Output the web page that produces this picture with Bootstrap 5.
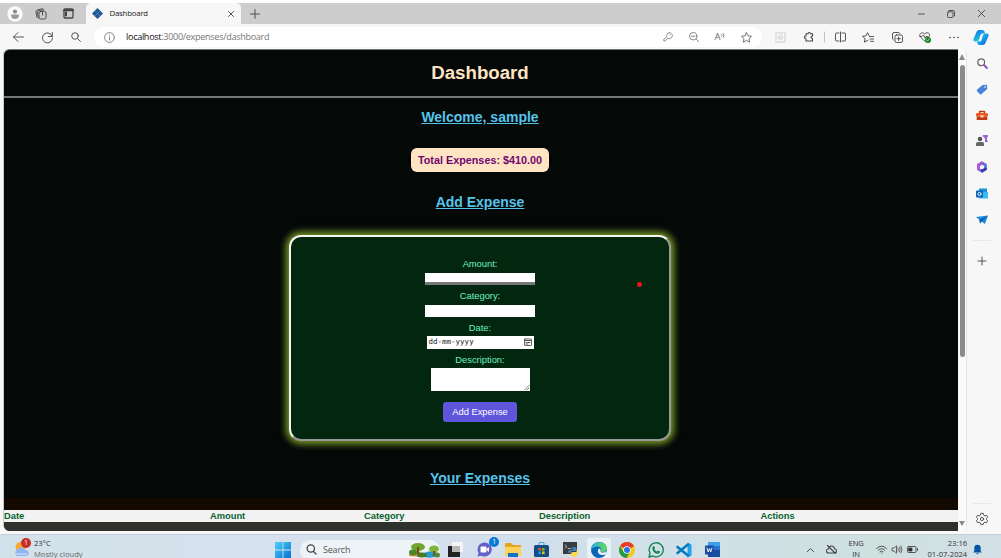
<!DOCTYPE html>
<html lang="en">
<head>
<meta charset="utf-8">
<meta name="viewport" content="width=device-width, initial-scale=1">
<title>Dashboard</title>
<link href="https://cdn.jsdelivr.net/npm/bootstrap@5.3.0/dist/css/bootstrap.min.css" rel="stylesheet">
<style>
body{width:1001px;height:558px;overflow:hidden;background:#f7f7f7;font-family:"Open Sans","Noto Sans",sans-serif;font-size:9px;line-height:1;color:#222}
svg{display:block;flex:none;overflow:visible;fill:none;stroke:#444;stroke-width:.9;stroke-linecap:round;stroke-linejoin:round}
.cell{flex:none;display:flex;align-items:center;justify-content:center;height:100%}
.w26{width:26px}.w28{width:28.4px}
.topgap{height:3px;background:#fff}
.tabstrip{height:21px;background:#cdcdcd}
.tabitem{width:155px;margin-left:4px;height:21px;background:#f7f7f7;border-radius:5px 5px 0 0;font-size:7.8px;letter-spacing:-.2px;padding:0 5px 0 6px}
.toolbar{height:25px;padding-top:1px}
.omni{width:668px;height:20px;border-radius:10px;background:#fff;font-size:9.1px;color:#777;padding-left:10px;padding-right:3px}
.omni b{font-weight:400;color:#111}
.url{margin-left:11px;letter-spacing:-.32px}
.viewport{height:482px;width:954px;margin-left:4px;background:#040807;border-radius:6px 0 0 6px;overflow:hidden;font-family:"Liberation Sans",Arial,sans-serif;text-align:center;border-top:1px solid #777;box-shadow:-1px 0 0 #c9c9c9}
.centered{width:952px}
.viewport h1{font-size:18.66px;font-weight:700;color:#ffe4c4;padding:12px 0 0;margin:0;line-height:22px}
.rule{height:2px;background:#777;margin-top:12px}
.viewport h2{font-size:14px;font-weight:700;color:#56c4ea;text-decoration:underline;line-height:16px;margin:0}
.total{display:inline-block;width:138px;height:24px;line-height:24px;border-radius:6px;background:#ffe4c4;color:#71066f;font-weight:700;font-size:10.8px;margin:23px 0 0}
.formbox{width:382px;height:206px;margin:25px auto 0;background:#03260f;border:2px solid;border-color:#f4f4f4 #989898 #989898 #f4f4f4;border-radius:12px;box-shadow:0 0 7px 3px #7c9f28;padding-top:21px;font-size:9.33px;color:#6df3c0}
.formbox label{height:12px;line-height:12px}
.fld{display:block;background:#fff;border:0;border-radius:0;height:12px;width:109.5px;padding:0}
.number-field{border-bottom:3px solid #777}
.datefield{width:107px;height:12.5px;font:7.5px/12px "DejaVu Sans Mono",monospace;color:#222;padding:0 2px}
.addbtn{background:#5f55dc;color:#fff;border-radius:3px;width:74px;height:20px;line-height:20px;font-size:9.33px;padding:0;border:0}
.brownband{height:12px;background:#130900;margin-top:12px}
.headrow{height:12px;background:#f2f2f2;color:#08622f;font-weight:700;font-size:9.33px;line-height:12px;text-align:left}
.darkrow{height:9px;background:#2f312c}
.scroller{width:9px;height:482px;background:#fafafa;border-radius:0 5px 5px 0;border-right:1px solid #e4e4e4}
.thumb{width:5px;height:292px;border-radius:3px;background:#8b8b8b;margin-top:5px}
.tri{width:0;height:0;border:3px solid transparent}
.sidebar{width:30px;padding-top:1px}
.sidebar .cell{height:26.1px}
.sidebar hr{width:18px;margin:0;border-top:1px solid #bbb}
.reddot{left:636.5px;top:281.5px;width:5px;height:5px;background:#e8141c}
.taskbar{height:25px;margin-top:2px;background:linear-gradient(90deg,#d2e2ea,#d7e1ee 30%,#d2dfec 52%,#cfe0e6 72%,#cfe0df 88%,#d3e0e8);border-top:1px solid #c5ced8;font-size:7.6px;color:#333;padding-top:5.5px;overflow:hidden}
.taskbar .cell{height:18px;width:28.56px}
.two{line-height:10.5px}
.tsearch{width:140px;height:20px;border-radius:10px;background:#eef3f8;font-size:9px;letter-spacing:-.2px;color:#555;margin-top:-1px;padding-left:6px}
.pip{left:19px;top:-4px;width:10px;height:10px;font-size:7px;line-height:10px;color:#fff;text-align:center}
.active-app{background:#e9f0f6;border-radius:3px;width:24px;height:24px}
</style>
</head>
<body>
<div class="topgap"></div>
<header class="tabstrip d-flex align-items-center">
  <div class="cell" style="width:30px"><svg width="16" height="16" viewBox="0 0 16 16"><circle cx="8" cy="8" r="7.7" fill="#fafafa" stroke="none"/><circle cx="8" cy="5.6" r="2.1" fill="#8c8c8c" stroke="none"/><path d="M4.2 8.5h7.6v1.5c0 2-1.7 3-3.800 3s-3.800-1-3.800-3z" fill="#999" stroke="none"/></svg></div>
  <div class="cell" style="width:22px"><svg width="12" height="12" viewBox="0 0 12 12"><rect x="4" y="3.500" width="7" height="7.500" rx="1.500"/><path d="M2 9.500 1 4Q.8 2.500 2.200 2L7 .8Q8.500.6 9 2M3.500 10 2.500 5Q2.300 3 4 2.500L8 2M7.500 3.500V7"/></svg></div>
  <div class="cell" style="width:32px"><svg width="11" height="11" viewBox="0 0 11 11"><rect x="1" y="1" width="9" height="9" rx="1" stroke-width="1.300"/><path d="M1 2.200h9M3 4.500v3" stroke-width="2"/></svg></div>
  <div class="tabitem d-flex align-items-center" style="margin-left:2px">
    <svg width="11" height="11" viewBox="0 0 11 11"><path d="M5.500 0 11 5.500 5.500 11 0 5.500z" fill="#1f5795" stroke="none"/><path d="m3 3 5 5m0-5-5 5" stroke="#5f8dbd" stroke-width=".7"/></svg>
    <span class="me-auto" style="margin-left:6.500px">Dashboard</span>
    <svg style="margin-right:2px" width="6" height="6" viewBox="0 0 6 6"><path d="m.5.5 5 5m0-5-5 5"/></svg>
  </div>
  <div class="cell" style="width:28px"><svg width="10" height="10" viewBox="0 0 10 10"><path d="M5 .5v9M.5 5h9"/></svg></div>
  <div class="cell ms-auto" style="width:30px"><svg width="7" height="8" viewBox="0 0 7 8"><path d="M.5 4h6"/></svg></div>
  <div class="cell" style="width:30px"><svg width="8" height="8" viewBox="0 0 8 8"><rect x=".5" y="1.800" width="5.500" height="5.700" rx="1"/><path d="M2 .5h4Q7.500.5 7.500 2v4"/></svg></div>
  <div class="cell" style="width:30px;margin-right:5px"><svg width="7" height="7" viewBox="0 0 7 7"><path d="m.3.3 6.400 6.400m0-6.400L.3 6.700"/></svg></div>
</header>

<nav class="toolbar d-flex align-items-center">
  <div class="cell" style="width:33px;padding-left:4px"><svg width="11" height="10" viewBox="0 0 11 10"><path d="M10.500 5H.5M5 .5.500 5 5 9.500"/></svg></div>
  <div class="cell" style="width:29px"><svg width="11" height="11" viewBox="0 0 11 11"><path d="M10.300 4.500A5 5 0 1 0 10.500 6M10.300.5v4h-4"/></svg></div>
  <div class="cell" style="width:28px"><svg width="10" height="10" viewBox="0 0 10 10"><circle cx="4" cy="4" r="3.300"/><path d="M6.500 6.500 9.500 9.500"/></svg></div>
  <div class="omni d-flex align-items-center" style="margin-left:4px">
    <svg width="11" height="11" viewBox="0 0 11 11" style="stroke:#777"><circle cx="5.500" cy="5.500" r="4.900"/><path d="M5.500 5v3M5.500 3v.2"/></svg>
    <span class="text-nowrap url"><b>localhost</b>:3000/expenses/dashboard</span>
    <div class="cell w26 ms-auto"><svg width="10" height="10" viewBox="0 0 10 10" style="stroke:#777"><path d="M3.700 4.500A2.900 2.900 0 1 1 6 6.500L4.800 6.300 2 9H.8V7.600z" stroke-width=".8"/><path d="M7.200 2.800v.1"/></svg></div>
    <div class="cell w26"><svg width="10" height="10" viewBox="0 0 10 10" style="stroke:#777"><circle cx="4.200" cy="4.200" r="3.700"/><path d="M2.500 4.200h3.400M7 7l2.500 2.500"/></svg></div>
    <div class="cell w26" style="color:#666;font-size:9.500px">A<svg width="5" height="8" viewBox="0 0 5 8" style="stroke:#666;stroke-width:.8"><path d="M.5 1.500q1 1 0 2M2.300.5q1.700 2 0 4"/></svg></div>
    <div class="cell w26"><svg width="11" height="11" viewBox="0 0 11 11" style="stroke:#666"><path d="m5.500.7 1.500 3.100 3.500.5L8 6.700l.6 3.500-3.100-1.700-3.100 1.700L3 6.700.5 4.300 4 3.800z"/></svg></div>
  </div>
  <div class="cell" style="width:36px"><svg width="11" height="11" viewBox="0 0 11 11"><rect width="11" height="11" rx="1" fill="#e2e2e2" stroke="none"/><path d="M2.500 4.500v-2h2m2 0h2v2M2.500 6.500v2h2m2 0h2v-2" stroke="#fff"/></svg></div>
  <div class="cell" style="width:22px"><svg width="10" height="10" viewBox="0 0 10 10"><path d="M2 1.800h2Q4 .5 5.200.5T6.500 1.800h2V4Q7 4 7 5.200T8.500 6.500V9H2V6.700Q.5 6.700.5 5.300T2 4z" stroke-width="1.100"/></svg></div>
  <div class="cell" style="width:8px"><svg width="1" height="10"><path d="M.5 0v10" stroke="#bbb"/></svg></div>
  <div class="cell" style="width:24px"><svg width="11" height="10" viewBox="0 0 11 10"><path d="M4 1H1.500Q.5 1 .5 2v6q0 1 1 1H4M7 1h2.500q1 0 1 1v6q0 1-1 1H7M5.500 0v10"/></svg></div>
  <div class="cell" style="width:32px"><svg width="12" height="11" viewBox="0 0 12 11"><path d="M7 3.500 5.500.7 4 3.800.5 4.300 3 6.700l-.6 3.500L6 8.200M7.500 4.500h4M8 7h3.500M8.500 9.300h3"/></svg></div>
  <div class="cell" style="width:27px"><svg width="11" height="11" viewBox="0 0 11 11"><rect x="3" y="3" width="7.500" height="7.500" rx="1.500"/><path d="M6.700 5v3.500M5 6.700h3.500M1.500 8Q.5 7.500.5 6V2Q.5.5 2 .5h4q1.500 0 2 1"/></svg></div>
  <div class="cell" style="width:28.400px"><svg width="12" height="11" viewBox="0 0 12 11"><path d="M6 9.500 1.500 5.200C-1 2.500 3-1 5.700 2 8.500-1 12 2 10.200 4.500M1 4.500h2L4.500 3 6 6l1-1.500h2"/><circle cx="9" cy="8" r="3" fill="#138222" stroke="none"/><path d="m7.700 8 1 .9 1.600-1.800" stroke="#fff" stroke-width=".7"/></svg></div>
  <div class="cell w28"><svg width="10" height="3" viewBox="0 0 10 3"><path d="M1 1.500h.1M5 1.500h.1M9 1.500h.1" stroke-width="1.600"/></svg></div>
  <div class="cell" style="width:27px"><svg width="16" height="15" viewBox="0 0 16 15"><defs><linearGradient id="cpa" x2=".6" y2="1"><stop stop-color="#155bd8"/><stop offset=".5" stop-color="#14a0ed"/><stop offset="1" stop-color="#38d8ad"/></linearGradient><linearGradient id="cpb" y2="1"><stop stop-color="#26d8ca"/><stop offset=".55" stop-color="#1594f1"/><stop offset="1" stop-color="#1652ce"/></linearGradient></defs><path d="M4 1Q5 0 6.500 0h3Q11 0 11.500 1.500L12 3.500H9.500Q8 3.500 7.500 5L6 10Q5.500 11.500 4 11.500H2Q0 11.500.5 9z" fill="url(#cpa)" stroke="none"/><path d="M12 14q-1 1-2.500 1h-3Q5 15 4.500 13.500L4 11.500h2.500q1.500 0 2-1.500L10 5q.5-1.500 2-1.500h2q2 0 1.500 2.500z" fill="url(#cpb)" stroke="none"/></svg></div>
</nav>

<div class="d-flex">
  <main class="viewport">
    <div class="centered"><h1>Dashboard</h1></div>
    <div class="rule"></div>
    <div class="centered">
    <h2 style="padding-top:11px">Welcome, sample</h2>
    <div class="total">Total Expenses: $410.00</div>
    <h2 style="margin-top:22px">Add Expense</h2>
    <form class="formbox d-flex flex-column align-items-center">
      <label>Amount:</label>
      <span class="fld number-field" style="margin:3px 0 5px"></span>
      <label>Category:</label>
      <span class="fld" style="margin:2.500px 0 5px"></span>
      <label>Date:</label>
      <span class="fld datefield d-flex align-items-center justify-content-between" style="margin:2.500px 0 5px"><span class="pt-1 mb-1">dd-mm-yyyy</span><svg width="8" height="8" viewBox="0 0 8 8"><rect x=".5" y="1" width="7" height="6.500" rx=".5" stroke-width=".8"/><path d="M.5 2.500h7M2 4.500h1M4 4.500h2M2 6h2"/></svg></span>
      <label>Description:</label>
      <span class="fld d-flex align-items-end justify-content-end" style="width:99px;height:22.500px;margin:2.500px 0 11px"><svg width="6" height="6" viewBox="0 0 6 6"><path d="M.5 5 5 .5M3 5l2-2" stroke-width=".7"/></svg></span>
      <button type="button" class="btn addbtn">Add Expense</button>
    </form>
    <h2 style="margin-top:29px">Your Expenses</h2>
    </div>
    <div class="brownband"></div>
    <div class="headrow d-flex"><span style="width:206px">Date</span><span style="width:154px">Amount</span><span style="width:175px">Category</span><span style="width:221.500px">Description</span><span>Actions</span></div>
    <div class="darkrow"></div>
  </main>
  <div class="scroller d-flex flex-column align-items-center">
    <div class="tri" style="border-bottom:6px solid #888;border-top:0;margin-top:5px"></div>
    <div class="thumb"></div>
    <div class="tri mt-auto" style="border-top:5px solid #888;border-bottom:0;margin-bottom:5px"></div>
  </div>
  <aside class="sidebar d-flex flex-column align-items-center">
    <div class="cell"><svg width="11" height="11" viewBox="0 0 11 11"><circle cx="4.200" cy="4.200" r="3.400" style="stroke:#666" stroke-width="1.200"/><path d="m7 7 3 3" style="stroke:#8b4fc2;stroke-width:1.800"/></svg></div>
    <div class="cell"><svg width="12" height="11" viewBox="0 0 12 11"><path d="M6.500 1 11 .8l.2 4.200-5.500 5q-1 1-2 0L1.200 7.500q-1-1 0-2z" fill="#4c82dc" stroke="none"/><circle cx="9" cy="3" r=".8" fill="#fff" stroke="none"/></svg></div>
    <div class="cell"><svg width="12" height="11" viewBox="0 0 12 11"><path d="M3.500 3V1.500h5V3" style="stroke:#b53613;stroke-width:1.300"/><rect y="3" width="12" height="3.500" rx="1" fill="#ed5a22" stroke="none"/><rect x=".7" y="6.500" width="10.600" height="3.500" fill="#c33d12" stroke="none"/><rect x="4.500" y="5" width="3" height="2.500" fill="#ffcab0" stroke="none"/></svg></div>
    <div class="cell"><svg width="12" height="12" viewBox="0 0 12 12"><g stroke="none"><circle cx="4" cy="4" r="2.300" fill="#555"/><path d="M0 8.500Q0 7 1.500 7h5Q8 7 8 8.500V11H0z" fill="#666"/><path d="M6.800 0H12v2h-1v3l1 2H9V4L8 2H6.800z" fill="#9a62d8"/></g></svg></div>
    <div class="cell"><svg width="12" height="12" viewBox="0 0 12 12"><path d="m6 2 3.500 2v4L6 10 2.500 8V4z" style="stroke:#5978df;stroke-width:2.800"/><path d="M2.500 8V4L6 2" style="stroke:#b258cf;stroke-width:2.800"/><path d="M9.500 8 6 10" style="stroke:#4538b8;stroke-width:2.800"/></svg></div>
    <div class="cell"><svg width="12" height="11" viewBox="0 0 12 11"><g stroke="none"><path d="M3 .5h8V5H3z" fill="#1d8fe0"/><path d="M3 4h9v6.500H3z" fill="#38b9f1"/><rect y="2.500" width="7" height="7" rx="1" fill="#0a62b6"/></g><circle cx="3.500" cy="6" r="1.600" style="stroke:#fff"/></svg></div>
    <div class="cell"><svg width="12" height="11" viewBox="0 0 12 11"><g stroke="none"><path d="M0 3 12 1.500 9 10 5.500 7.500 4 9.500 3.500 6z" fill="#168de0"/><path d="M3.500 6 12 1.500 5.500 7.500 4 9.500z" fill="#0b5796"/></g></svg></div>
    <hr style="margin-top:7px">
    <div class="cell" style="margin-top:7.500px"><svg width="8" height="8" viewBox="0 0 8 8"><path d="M4 0v8M0 4h8"/></svg></div>
    <hr style="margin-top:229px">
    <div class="cell" style="margin-top:2px"><svg width="12" height="12" viewBox="0 0 12 12"><path d="m4.700.7-.4 1.500-1.200.7-1.600-.5L.4 4.300l1.100 1.200v1L.4 7.700l1.100 2 1.600-.5 1.200.7.4 1.500h2.600l.4-1.500 1.200-.7 1.600.5 1.100-2-1.100-1.200v-1l1.100-1.200-1.100-2-1.600.5-1.200-.7-.4-1.500z"/><circle cx="6" cy="6" r="1.600"/></svg></div>
  </aside>
</div>
<span class="reddot position-absolute rounded-circle"></span>

<footer class="taskbar d-flex align-items-start">
  <div class="position-relative" style="width:34px;height:18px;padding:0 0 0 13px"><svg width="16" height="16" viewBox="0 0 16 16"><circle cx="7.500" cy="6" r="5" fill="#f5a832" stroke="none"/><path d="M4 15a3.500 3.500 0 0 1 0-6 4.500 4.500 0 0 1 8 0 3 3 0 0 1 1 6z" fill="#8eb5f2" stroke="none"/><path d="M4 13h9" style="stroke:#b9d0fa;stroke-width:2"/></svg><span class="pip position-absolute rounded-circle" style="left:21px;top:-3px;background:#c62a20">1</span></div>
  <div class="two text-nowrap" style="width:232px;margin-top:-2.500px"><div>23°C</div><div style="color:#666">Mostly cloudy</div></div>
  <div class="cell" style="width:34px"><svg width="16" height="16" viewBox="0 0 16 16"><defs><linearGradient id="wn" x2="1" y2="1"><stop stop-color="#4bd0fb"/><stop offset="1" stop-color="#0872d0"/></linearGradient></defs><path d="M0 0h7.600v7.600H0zM8.400 0H16v7.600H8.400zM0 8.400h7.600V16H0zM8.400 8.400H16V16H8.400z" fill="url(#wn)" stroke="none"/></svg></div>
  <div class="tsearch d-flex align-items-center"><svg width="11" height="11" viewBox="0 0 11 11"><circle cx="4.800" cy="4.500" r="3.700" stroke-width="1.300"/><path d="m7.500 7.500 2.500 2.500" stroke-width="1.300"/></svg><span style="margin-left:6px">Search</span>
    <svg class="ms-auto me-0" width="32" height="17" viewBox="0 0 32 17"><g stroke="none"><path d="M1 15Q2 10 7 11l3-2 3 3q3-1 4 4z" fill="#d88a2e"/><path d="M16 12q5-3 12-1l3 4q-8 3-15 1z" fill="#2a9bd0"/><ellipse cx="10" cy="6" rx="7" ry="4" fill="#6ea72b"/><ellipse cx="5" cy="11.500" rx="4" ry="3" fill="#4b8728"/><path d="M9 6h2v9H9z" fill="#7b4b20"/><ellipse cx="26" cy="8" rx="5" ry="3.500" fill="#7cb63a"/><ellipse cx="14" cy="14" rx="5" ry="2.500" fill="#447c2c"/><path d="M25 10h2v5h-2z" fill="#725029"/><ellipse cx="29" cy="14" rx="3" ry="2.500" fill="#4e8b32"/></g></svg></div>
  <div class="cell" style="margin-left:1.700px"><svg width="15" height="15" viewBox="0 0 15 15"><g stroke="none"><path d="M0 4h12v11H0z" fill="#222"/><path d="M4 0h11v10H4z" fill="#f4f4f4"/><path d="M4 4h8v6H4z" fill="#b8b8b8"/></g></svg></div>
  <div class="cell position-relative"><svg width="15" height="15" viewBox="0 0 15 15"><path d="M7.500.5a7 7 0 1 1-3 13.200L.5 14.500 1.500 11A7 7 0 0 1 7.500.5" fill="#6660c8" stroke="none"/><rect x="3.500" y="4.500" width="6" height="6" rx="1" fill="#fff" stroke="none"/><path d="m9.500 7 2.500-2v5L9.500 8z" fill="#fff" stroke="none"/></svg><span class="pip position-absolute rounded-circle" style="background:#087bd4">1</span></div>
  <div class="cell"><svg width="16" height="14" viewBox="0 0 16 14"><g stroke="none"><path d="M0 1q0-1 1-1h5l2 2h7q1 0 1 1v9H0z" fill="#e4a524"/><path d="M0 4h16v9H0z" fill="#ffd35b"/><path d="M3 10h10v4H3z" fill="#1671c7"/></g></svg></div>
  <div class="cell"><svg width="15" height="15" viewBox="0 0 15 15"><path d="M5 3.500v-2q0-1 1-1h3q1 0 1 1v2" style="stroke:#2a9fe1"/><rect y="3" width="15" height="12" rx="1.500" fill="#164d86" stroke="none"/><g stroke="none"><path d="M4.500 6h2.600v2.600H4.500z" fill="#f25022"/><path d="M8 6h2.600v2.600H8z" fill="#7fba00"/><path d="M4.500 9.500h2.600v2.600H4.500z" fill="#00a4ef"/><path d="M8 9.500h2.600v2.600H8z" fill="#ffb900"/></g></svg></div>
  <div class="cell"><svg width="15" height="15" viewBox="0 0 15 15"><path d="M0 0h14v12H0z" fill="#3a3d3f" stroke="none"/><path d="m2 3 2 1.500L2 6M5 6.500h3" style="stroke:#ccc;stroke-width:.8"/><path d="M9 5h3q1.500 0 1.500 1.500V9H9q-1 0-1 2H6.500Q5 11 5 9.500T7 8h3" fill="#3c82b8" stroke="none"/><path d="M13.500 8q2 0 1.500 3t-4 4q-3 0-3-2v-1.500Q8 10 10 10h3.500z" fill="#ffd64d" stroke="none"/></svg></div>
  <div class="cell"><div class="active-app d-flex align-items-center justify-content-center"><svg width="16" height="16" viewBox="0 0 16 16"><defs><linearGradient id="edg" x2="1"><stop stop-color="#24b5e3"/><stop offset="1" stop-color="#68d55d"/></linearGradient></defs><circle cx="8" cy="8" r="8" fill="#0c65b5" stroke="none"/><path d="M0 8C0-2 16-2 16 6q0 4-4 4-3 0-2.500-1.500Q11 5 7 4.500 2 4 0 8" fill="url(#edg)" stroke="none"/><path d="M7 8q-1 5 5 5 2 0 3-1l1-3q-2 1.500-4 1.500-3 0-2.500-2T8 6.500z" fill="#e9f4fb" stroke="none"/></svg></div></div>
  <div class="cell"><svg width="16" height="16" viewBox="0 0 16 16"><g stroke="none"><circle cx="8" cy="8" r="8" fill="#f8c51b"/><path d="M8 8 1.100 4A8 8 0 0 1 15 4.200z" fill="#e53c2e"/><path d="M1.100 4A8 8 0 0 0 7.500 16L11 10 8 8 4 9z" fill="#229a48"/><circle cx="8" cy="8" r="3.800" fill="#fff"/><circle cx="8" cy="8" r="3" fill="#2b73e0"/></g></svg></div>
  <div class="cell"><svg width="16" height="16" viewBox="0 0 16 16"><path d="m1 15 1-4a7 7 0 1 1 3 3z" style="stroke:#168451;stroke-width:1.300"/><path d="M5 4.500q1-1 1.500.3l.5 1.400-.7 1Q7.500 9 9 9.600l1-1 2 1q0 2-2 2.200Q5.500 11.500 4.300 7q0-1.500.7-2.500" fill="#168451" stroke="none"/></svg></div>
  <div class="cell"><svg width="16" height="16" viewBox="0 0 16 16"><path d="m11.500.5 4 2v11l-4 2z" fill="#23a2ec" stroke="none"/><path d="M12 2.500 1.500 11M12 13.500 1.500 5" style="stroke:#087ac2;stroke-width:2.600"/></svg></div>
  <div class="cell"><svg width="16" height="15" viewBox="0 0 16 15"><g stroke="none"><path d="M3 0h12v4H3z" fill="#3ba0ec"/><path d="M3 4h12v4H3z" fill="#2876cf"/><path d="M3 8h12v7H3z" fill="#174c9f"/><rect y="3.500" width="9" height="9" rx="1" fill="#164b9e"/></g><path d="m2 6 1.200 4L4.500 6.500 5.700 10 7 6" style="stroke:#fff;stroke-width:.9"/></svg></div>
  <div class="cell" style="margin-left:72px;width:22px"><svg width="7" height="4" viewBox="0 0 7 4"><path d="M.3 3.700 3.500.5l3.200 3.200"/></svg></div>
  <div class="cell" style="width:21px"><svg width="11" height="9" viewBox="0 0 11 9"><path d="M2.500 8Q.5 8 .5 6t2-2.200Q3 1 5.500 1t3 2.800Q10.500 4 10.500 6t-2 2zM1.500.5l8 8" stroke-width="1.100"/></svg></div>
  <div class="two text-center" style="width:28px;margin-top:-2.500px"><div>ENG</div><div>IN</div></div>
  <div class="cell" style="width:23px"><svg width="11" height="9" viewBox="0 0 11 9"><path d="M.5 3.500q5-5 10 0M2.200 5.200q3.300-3.200 6.600 0M3.900 6.800q1.600-1.600 3.200 0M5.500 8v.1"/></svg></div>
  <div class="cell" style="width:8px"><svg width="10" height="9" viewBox="0 0 10 9" style="stroke-width:.8"><path d="M.5 3h1.700L4.500.8v7.400L2.200 6H.5zM6 3q1 1.500 0 3M7.500 2q1.800 2.500 0 5M9 1q2.200 3.500 0 7"/></svg></div>
  <div class="cell" style="width:22px"><svg width="11" height="7" viewBox="0 0 11 7"><rect x=".5" y=".5" width="8.500" height="6" rx="1"/><path d="M2 2h3v3H2z" fill="#222"/><path d="M10.500 2.500v2"/></svg></div>
  <div class="two text-end" style="width:44px;margin-top:-2.500px"><div>23:16</div><div>01-07-2024</div></div>
  <div class="cell" style="width:20px"><svg width="9" height="11" viewBox="0 0 9 11"><path d="M.3 8.500 1.300 7V4a3.200 3.200 0 0 1 6.400 0v3l1 1.500zM3 9.300h3q-1.500 2-3 0" fill="#0754a6" stroke="none"/></svg></div>
</footer>
<script src="https://cdn.jsdelivr.net/npm/bootstrap@5.3.0/dist/js/bootstrap.bundle.min.js"></script>
</body>
</html>
